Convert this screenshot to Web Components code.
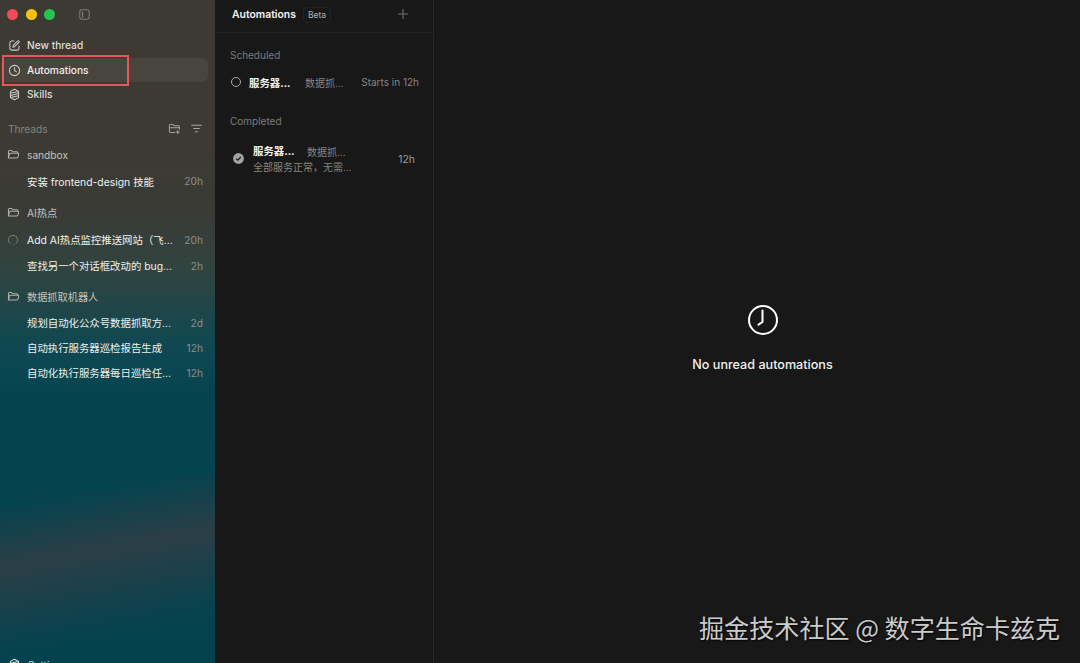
<!DOCTYPE html>
<html lang="zh">
<head>
<meta charset="utf-8">
<title>Automations</title>
<style>
  html, body { margin: 0; height: 100%; background: #181818; overflow: hidden; }
  body { font-family: "Inter", "Noto Sans CJK SC", sans-serif; }
</style>
</head>
<body>
<app-shell>
  <app-sidebar slot="sidebar">
    <nav-row icon="edit" slot="nav">New thread</nav-row>
    <nav-row icon="clock" active slot="nav">Automations</nav-row>
    <nav-row icon="cube" slot="nav">Skills</nav-row>

    <folder-row>sandbox</folder-row>
    <thread-row time="20h" style="margin-top:4px">安装 frontend-design 技能</thread-row>
    <folder-row style="margin-top:9px">AI热点</folder-row>
    <thread-row time="20h" spinner style="margin-top:4.5px">Add AI热点监控推送网站（飞...</thread-row>
    <thread-row time="2h" style="margin-top:1px">查找另一个对话框改动的 bug...</thread-row>
    <folder-row style="margin-top:8.5px">数据抓取机器人</folder-row>
    <thread-row time="2d" style="margin-top:3.5px">规划自动化公众号数据抓取方...</thread-row>
    <thread-row time="12h">自动执行服务器巡检报告生成</thread-row>
    <thread-row time="12h">自动化执行服务器每日巡检任...</thread-row>
  </app-sidebar>

  <automation-list slot="list">
    <section-label>Scheduled</section-label>
    <scheduled-row name="服务器..." task="数据抓..." when="Starts in 12h"></scheduled-row>
    <section-label style="margin-top:12px">Completed</section-label>
    <completed-row name="服务器..." task="数据抓..." note="全部服务正常，无需..." when="12h"></completed-row>
  </automation-list>

  <empty-state slot="main">No unread automations</empty-state>
</app-shell>

<script>
const ICONS = {
  edit: '<path d="M13.5 8.5v3.2a2 2 0 0 1-2 2H4.3a2 2 0 0 1-2-2V4.5a2 2 0 0 1 2-2h3.2"/><path d="M6 10.2l.5-2.3 5.4-5.4a1.1 1.1 0 0 1 1.6 1.6L8.1 9.5z"/>',
  clock: '<circle cx="8" cy="8" r="6.3"/><path d="M8 4.2V8l2.5 1.8"/>',
  cube: '<path d="M8 1.6l5 2.6v7.6l-5 2.6-5-2.6V4.2z"/><path d="M3 6.6l10-2.4M3 9.2l10-2.4M3 11.8l10-2.4"/>',
  folder: '<path d="M1.8 12V4.4a1.3 1.3 0 0 1 1.3-1.3h2.6l1.4 1.5h5a1.3 1.3 0 0 1 1.3 1.3v.8"/><path d="M1.8 12.2l1.2-4.7a1.2 1.2 0 0 1 1.2-.9h9.2a1 1 0 0 1 1 1.3l-1 3.3a1.4 1.4 0 0 1-1.3 1H3a1.2 1.2 0 0 1-1.2-1z"/>',
  newFolder: '<path d="M8.2 13H3a1.3 1.3 0 0 1-1.3-1.3V4.3A1.3 1.3 0 0 1 3 3h3l1.4 1.6h5.3a1.3 1.3 0 0 1 1.3 1.3V9"/><path d="M2 7h12"/><path d="M12 10.4v4M10 12.4h4"/>',
  filter: '<path d="M2 4h12M4.4 8h7.2M6.6 12h2.8"/>',
  sidebar: '<rect x="2.2" y="2.2" width="11.6" height="11.6" rx="2.6"/><path d="M5.6 5v6" stroke-width="1.6"/>'
};

function icon(name, size) {
  return `<svg width="${size}" height="${size}" viewBox="0 0 16 16" fill="none" stroke="currentColor" stroke-width="1.25" stroke-linecap="round" stroke-linejoin="round">${ICONS[name]}</svg>`;
}

// helper for the plain elements that only need one template
function define(tag, css, html) {
  customElements.define(tag, class extends HTMLElement {
    constructor() {
      super();
      this.attachShadow({ mode: "open" });
    }
    connectedCallback() {
      const a = (n) => this.getAttribute(n) || "";
      this.shadowRoot.innerHTML = `<style>${css}</style>${html(a, this)}`;
    }
  });
}

define("app-shell", `
  :host { display: grid; grid-template-columns: 215px 219px 1fr; width: 1080px; height: 663px; position: relative; color: #fff; overflow: hidden; }
  .mark { position: absolute; left: 699px; top: 611px; font: 400 25.1px "Noto Sans CJK SC", sans-serif; line-height: 32px; color: #cbcbcb; text-shadow: 1px 1px 2px #000; white-space: nowrap; }
`, () => `
  <slot name="sidebar"></slot><slot name="list"></slot><slot name="main"></slot>
  <div class="mark">掘金技术社区 @ 数字生命卡兹克</div>
`);

define("app-sidebar", `
  :host { display: flex; flex-direction: column; position: relative; height: 663px; overflow: hidden;
    background:
      linear-gradient(170deg, transparent 0, transparent 72%, rgba(46,62,70,.95) 81%, transparent 93%),
      linear-gradient(180deg, #3c3a32 0, #3c3a32 150px, #3a3b37 215px, #30443f 270px, #104852 345px, #03444f 400px, #05424f 663px); }
  .lights { display: flex; align-items: center; gap: 7.7px; height: 28px; padding-left: 7px; }
  .lights i { width: 11px; height: 11px; border-radius: 50%; }
  .toggle { margin-left: 14.5px; color: #7e7d77; display: flex; }
  .nav { display: flex; flex-direction: column; margin-top: 5px; }
  .head { display: flex; align-items: center; height: 20px; margin: 12px 0 6px; padding: 0 12px 0 8px; font-size: 10.2px; color: #85847d; }
  .head span { flex: 1; }
  .head svg { display: block; color: #a5a49c; }
  .head svg + svg { margin-left: 9px; }
  .threads { display: flex; flex-direction: column; }
  .settings { position: absolute; left: 8px; top: 658px; display: flex; align-items: center; gap: 7px; font-size: 10.2px; color: #dfe3e3; }
  .box { position: absolute; left: 2px; top: 55px; width: 123px; height: 27px; border: 2px solid #e8565c; pointer-events: none; }
`, () => `
  <div class="lights">
    <i style="background:#f4475a"></i><i style="background:#f9c30f"></i><i style="background:#23c552"></i>
    <span class="toggle">${icon("sidebar", 13)}</span>
  </div>
  <div class="nav"><slot name="nav"></slot></div>
  <div class="head"><span>Threads</span>${icon("newFolder", 13)}${icon("filter", 13)}</div>
  <div class="threads"><slot></slot></div>
  <div class="settings">${icon("cube", 13)}<span>Settings</span></div>
  <div class="box"></div>
`);

define("nav-row", `
  :host { display: flex; align-items: center; gap: 6px; height: 24.5px; margin: 0 7px 0 1px; padding-left: 7px; border-radius: 6px; font-size: 10.2px; font-weight: 500; color: #dfded9; }
  :host([active]) { background: #47453e; color: #f0efea; box-sizing: border-box; padding-top: 1px; }
  svg { color: #cfcec8; flex: none; }
`, (a) => `${icon(a("icon"), 13)}<slot></slot>`);

define("folder-row", `
  :host { display: flex; align-items: center; gap: 7px; height: 20px; padding-left: 7px; font-size: 10.2px; color: #c4c3bd; }
  svg { color: #b0b0aa; flex: none; }
`, () => `${icon("folder", 13)}<slot></slot>`);

define("thread-row", `
  :host { display: flex; align-items: center; height: 25px; padding: 0 12px 0 27px; position: relative; font-size: 10.4px; font-weight: 400; color: #f0f1ee; }
  .t { white-space: nowrap; }
  .w { margin-left: auto; color: #8e8f88; font-size: 10.2px; flex: none; }
  .s { position: absolute; left: 8px; top: 7.5px; width: 10px; height: 10px; box-sizing: border-box; border-radius: 50%; border: 1.2px solid #7a7b74; border-bottom-color: #4e4f49; }
`, (a, el) => `${el.hasAttribute("spinner") ? '<i class="s"></i>' : ""}<span class="t"><slot></slot></span><span class="w">${a("time")}</span>`);

define("automation-list", `
  :host { display: block; height: 663px; background: #181818; border-right: 1px solid #272727; box-sizing: border-box; }
  .top { display: flex; align-items: center; height: 28px; padding: 0 24px 4px 17px; border-bottom: 1px solid #232323; margin-bottom: 12px; }
  b { font-size: 10.4px; font-weight: 600; color: #f2f2f2; }
  .beta { margin: 1px 0 0 7px; padding: 0 4px; height: 14px; line-height: 14px; border-radius: 4px; border: 1px solid #232323; font-size: 8.5px; color: #b0b0b0; }
  .plus { margin-left: auto; color: #6f6f6f; display: flex; }
`, () => `
  <div class="top"><b>Automations</b><span class="beta">Beta</span>
    <span class="plus"><svg width="12" height="12" viewBox="0 0 12 12" fill="none" stroke="currentColor" stroke-width="1.1"><path d="M6 1v10M1 6h10"/></svg></span>
  </div>
  <slot></slot>
`);

define("section-label", `
  :host { display: block; height: 20px; line-height: 20px; padding-left: 15px; font-size: 10px; color: #7b7b7b; }
`, () => `<slot></slot>`);

define("scheduled-row", `
  :host { display: flex; align-items: center; height: 34px; padding: 0 14px 0 16px; font-size: 10.4px; white-space: nowrap; }
  i { width: 10px; height: 10px; box-sizing: border-box; border: 1.2px solid #a8a8a8; border-radius: 50%; margin-right: 8px; flex: none; }
  .n { width: 56px; font-weight: 700; color: #f0f0f0; }
  .k { color: #858585; font-size: 10px; }
  .w { margin-left: auto; color: #858585; font-size: 10px; }
`, (a) => `<i></i><span class="n">${a("name")}</span><span class="k">${a("task")}</span><span class="w">${a("when")}</span>`);

define("completed-row", `
  :host { display: flex; align-items: center; height: 42px; padding: 0 18px 0 18px; font-size: 10.4px; margin-top: 7px; white-space: nowrap; }
  svg { flex: none; margin-right: 9px; position: relative; top: -1px; }
  .c { display: flex; flex-direction: column; gap: 1px; }
  .l { display: flex; height: 14px; line-height: 14px; }
  .n { width: 54px; font-weight: 700; color: #f0f0f0; }
  .k { color: #858585; font-size: 10px; }
  .d { height: 14px; line-height: 14px; color: #858585; font-size: 10px; }
  .w { margin-left: auto; color: #9a9a9a; font-size: 10.4px; }
`, (a) => `
  <svg width="11" height="11" viewBox="0 0 11 11"><circle cx="5.5" cy="5.5" r="5.4" fill="#a3a3a3"/><path d="M3.2 5.7l1.6 1.5 3-3.2" fill="none" stroke="#181818" stroke-width="1.2"/></svg>
  <div class="c"><div class="l"><span class="n">${a("name")}</span><span class="k">${a("task")}</span></div><div class="d">${a("note")}</div></div>
  <span class="w">${a("when")}</span>`);

define("empty-state", `
  :host { display: flex; flex-direction: column; align-items: center; height: 663px; padding: 303.5px 0 0 11px; box-sizing: border-box; background: #181818; font-size: 12.6px; font-weight: 500; color: #f0f0f0; }
  svg { display: block; margin-bottom: 21.5px; }
`, () => `
  <svg width="32" height="32" viewBox="0 0 32 32" fill="none" stroke="#fff" stroke-width="2" stroke-linecap="round" stroke-linejoin="round"><circle cx="16" cy="16" r="14"/><path d="M15.5 6.5V18l-4 2.6"/></svg>
  <slot></slot>
`);
</script>
</body>
</html>
